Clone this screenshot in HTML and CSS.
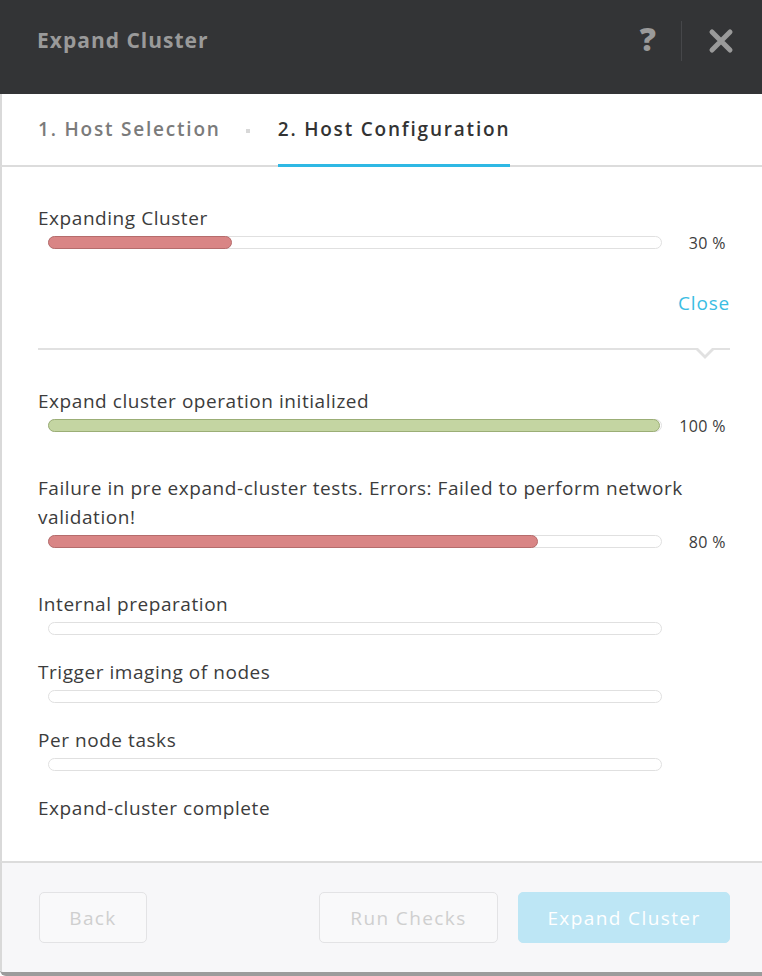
FILE: index.html
```html
<!DOCTYPE html>
<html lang="en">
<head>
    <meta charset="UTF-8">
    <meta name="viewport" content="width=device-width, initial-scale=1.0">
    <title>Expand Cluster</title>
    <link rel="stylesheet" href="styles.css">
</head>
<body>
    <div class="dialog">
        <header class="head">
            <h1 class="title">Expand Cluster</h1>
            <div class="head-tools">
                <span class="help">?</span>
                <span class="divider"></span>
                <svg class="close-x" width="26" height="26" viewBox="0 0 26 26">
                    <path d="M4 4 L22 22 M22 4 L4 22" stroke="#9a9a9a" stroke-width="5" stroke-linecap="round"/>
                </svg>
            </div>
        </header>

        <nav class="tabs">
            <span class="tab">1. Host Selection</span>
            <span class="tab-dot"></span>
            <span class="tab active">2. Host Configuration</span>
        </nav>

        <main class="content">
            <div class="overall">
                <div class="label">Expanding Cluster</div>
                <div class="bar-row">
                    <div class="bar"><div class="fill red" style="width: 30%"></div></div>
                    <span class="pct">30 %</span>
                </div>
            </div>

            <div class="close-row"><a class="close-link">Close</a></div>
            <div class="sep"><span class="caret"></span></div>

            <div class="step with-pct">
                <div class="label">Expand cluster operation initialized</div>
                <div class="bar-row">
                    <div class="bar"><div class="fill green" style="width: 100%"></div></div>
                    <span class="pct">100 %</span>
                </div>
            </div>
            <div class="step with-pct">
                <div class="label">Failure in pre expand-cluster tests. Errors: Failed to perform network validation!</div>
                <div class="bar-row">
                    <div class="bar"><div class="fill red" style="width: 80%"></div></div>
                    <span class="pct">80 %</span>
                </div>
            </div>
            <div class="step">
                <div class="label">Internal preparation</div>
                <div class="bar-row"><div class="bar"></div></div>
            </div>
            <div class="step">
                <div class="label">Trigger imaging of nodes</div>
                <div class="bar-row"><div class="bar"></div></div>
            </div>
            <div class="step">
                <div class="label">Per node tasks</div>
                <div class="bar-row"><div class="bar"></div></div>
            </div>
            <div class="step">
                <div class="label">Expand-cluster complete</div>
            </div>
        </main>

        <footer class="foot">
            <button class="btn back">Back</button>
            <span class="spacer"></span>
            <button class="btn checks">Run Checks</button>
            <button class="btn primary">Expand Cluster</button>
        </footer>
    </div>
</body>
</html>
```
FILE: styles.css
```css
*{
    padding: 0;
    margin: 0;
    box-sizing: border-box;
}

body{
    background: #fff;
    font-family: "Open Sans", Lato, sans-serif;
    color: #3c3c3c;
}

.dialog{
    width: 762px;
    height: 976px;
    display: flex;
    flex-direction: column;
    border-bottom: 4px solid #9c9c9c;
    border-bottom-left-radius: 6px;
    overflow: hidden;
}

.head{
    height: 94px;
    background: #333436;
    display: flex;
    align-items: center;
    justify-content: space-between;
    padding: 0 28px 0 37px;
}

.title{
    font-size: 21px;
    font-weight: 700;
    color: #9a9a9a;
    letter-spacing: 1px;
    margin-top: -14px;
}

.head-tools{
    display: flex;
    align-items: center;
    margin-top: -12px;
}

.help{
    font-size: 32px;
    font-weight: 800;
    color: #9a9a9a;
    margin-top: -6px;
}

.divider{
    width: 1px;
    height: 40px;
    background: #46474a;
    margin: 0 26px 0 25px;
}

.tabs{
    height: 73px;
    border-left: 2px solid #d9d9d9;
    border-bottom: 2px solid #dcdcdc;
    display: flex;
    align-items: stretch;
    padding-left: 36px;
}

.tab{
    display: flex;
    align-items: center;
    font-size: 19px;
    font-weight: 600;
    letter-spacing: 1.8px;
    color: #7b7b7b;
    border-bottom: 3px solid transparent;
    margin-bottom: -2px;
}

.tab.active{
    color: #333;
    border-bottom-color: #2fb8e4;
}

.tab-dot{
    width: 4px;
    height: 4px;
    background: #d8d8d8;
    align-self: center;
    margin: 2px 28px 0 25px;
}

.content{
    flex: 1;
    border-left: 2px solid #d9d9d9;
    padding: 37px 32px 0 36px;
}

.label{
    font-size: 19px;
    line-height: 29px;
    letter-spacing: 0.55px;
    color: #3c3c3c;
}

.bar-row{
    display: flex;
    align-items: center;
    height: 19px;
}

.bar{
    margin-left: 10px;
    width: 614px;
    height: 13px;
    border: 1px solid #e0e0e0;
    border-radius: 7px;
    background: #fff;
}

.fill{
    height: 13px;
    margin: -1px;
    border-radius: 7px;
    border: 1px solid;
}

.fill.red{
    background: #d98585;
    border-color: #b56c6c;
}

.fill.green{
    background: #c4d5a2;
    border-color: #9bae76;
}

.pct{
    margin-left: auto;
    margin-right: 4px;
    font-size: 16px;
    letter-spacing: 0.4px;
    color: #3c3c3c;
}

.close-row{
    display: flex;
    justify-content: flex-end;
    margin-top: 37px;
}

.close-link{
    font-size: 19px;
    line-height: 29px;
    letter-spacing: 0.8px;
    color: #3bbde3;
}

.sep{
    position: relative;
    height: 2px;
    background: #e1e1e1;
    margin-top: 30px;
    margin-bottom: 37px;
}

.caret{
    position: absolute;
    right: 16px;
    top: 2px;
    width: 0;
    height: 0;
    border-left: 9px solid transparent;
    border-right: 9px solid transparent;
    border-top: 9px solid #e1e1e1;
}

.caret::after{
    content: "";
    position: absolute;
    left: -7px;
    top: -11px;
    border-left: 7px solid transparent;
    border-right: 7px solid transparent;
    border-top: 7px solid #fff;
}

.step{
    margin-bottom: 20px;
}

.step.with-pct{
    margin-bottom: 39px;
}

.foot{
    height: 111px;
    background: #f7f7f9;
    border-left: 2px solid #d9d9d9;
    border-top: 2px solid #dcdcdc;
    display: flex;
    align-items: center;
    padding: 0 32px 0 37px;
    gap: 20px;
}

.spacer{
    flex: 1;
}

.btn{
    height: 51px;
    border: 1px solid #e3e3e5;
    border-radius: 5px;
    background: #f9f9fa;
    font-family: "Open Sans", Lato, sans-serif;
    font-size: 19px;
    letter-spacing: 1.4px;
    color: #cfcfcf;
}

.btn.back{
    width: 108px;
}

.btn.checks{
    width: 179px;
}

.btn.primary{
    background: #bde6f5;
    border-color: #bde6f5;
    color: #fff;
    width: 212px;
}
```
